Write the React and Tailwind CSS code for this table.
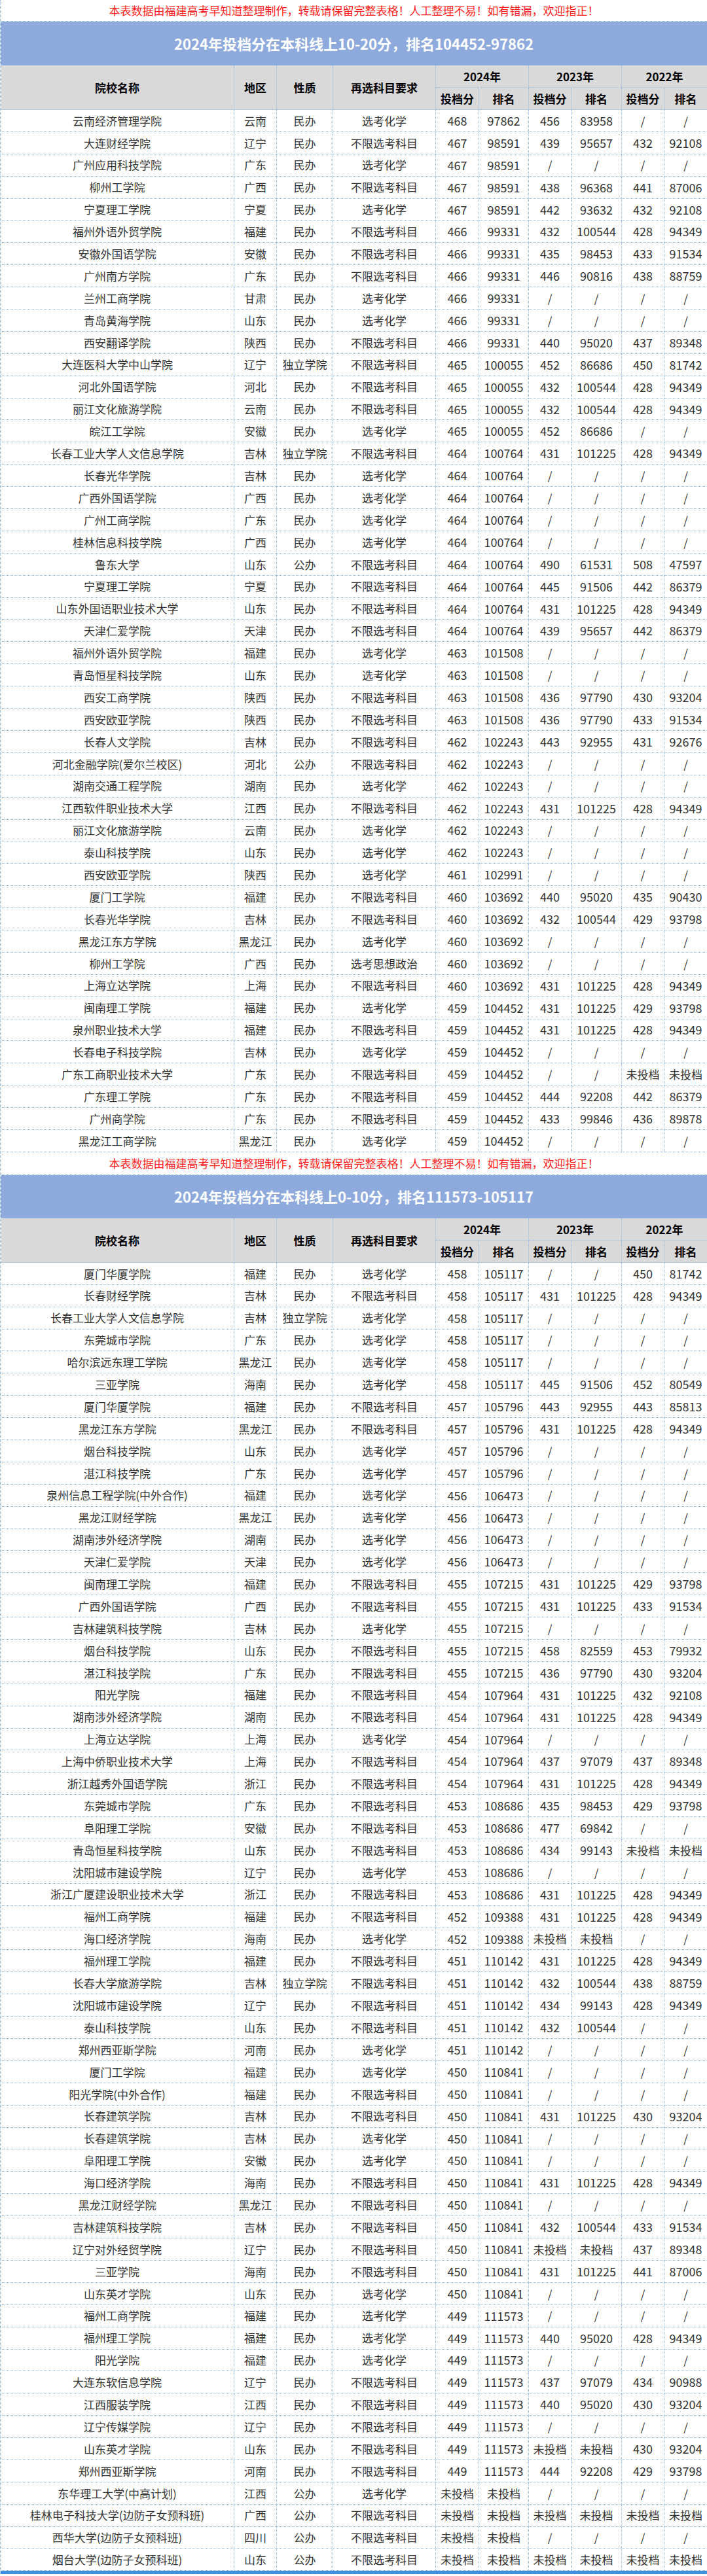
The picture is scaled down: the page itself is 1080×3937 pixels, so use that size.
import React from "react";

const COLS =
  "grid grid-cols-[357px_65px_86px_157px_66px_76px_65px_77px_65px_66px]";

const NOTICE =
  "本表数据由福建高考早知道整理制作，转载请保留完整表格！人工整理不易！如有错漏，欢迎指正！";

const T1 = `云南经济管理学院 云南 民办 选考化学 468 97862 456 83958 / /
大连财经学院 辽宁 民办 不限选考科目 467 98591 439 95657 432 92108
广州应用科技学院 广东 民办 选考化学 467 98591 / / / /
柳州工学院 广西 民办 不限选考科目 467 98591 438 96368 441 87006
宁夏理工学院 宁夏 民办 选考化学 467 98591 442 93632 432 92108
福州外语外贸学院 福建 民办 不限选考科目 466 99331 432 100544 428 94349
安徽外国语学院 安徽 民办 不限选考科目 466 99331 435 98453 433 91534
广州南方学院 广东 民办 不限选考科目 466 99331 446 90816 438 88759
兰州工商学院 甘肃 民办 选考化学 466 99331 / / / /
青岛黄海学院 山东 民办 选考化学 466 99331 / / / /
西安翻译学院 陕西 民办 不限选考科目 466 99331 440 95020 437 89348
大连医科大学中山学院 辽宁 独立学院 不限选考科目 465 100055 452 86686 450 81742
河北外国语学院 河北 民办 不限选考科目 465 100055 432 100544 428 94349
丽江文化旅游学院 云南 民办 不限选考科目 465 100055 432 100544 428 94349
皖江工学院 安徽 民办 选考化学 465 100055 452 86686 / /
长春工业大学人文信息学院 吉林 独立学院 不限选考科目 464 100764 431 101225 428 94349
长春光华学院 吉林 民办 选考化学 464 100764 / / / /
广西外国语学院 广西 民办 选考化学 464 100764 / / / /
广州工商学院 广东 民办 选考化学 464 100764 / / / /
桂林信息科技学院 广西 民办 选考化学 464 100764 / / / /
鲁东大学 山东 公办 不限选考科目 464 100764 490 61531 508 47597
宁夏理工学院 宁夏 民办 不限选考科目 464 100764 445 91506 442 86379
山东外国语职业技术大学 山东 民办 不限选考科目 464 100764 431 101225 428 94349
天津仁爱学院 天津 民办 不限选考科目 464 100764 439 95657 442 86379
福州外语外贸学院 福建 民办 选考化学 463 101508 / / / /
青岛恒星科技学院 山东 民办 选考化学 463 101508 / / / /
西安工商学院 陕西 民办 不限选考科目 463 101508 436 97790 430 93204
西安欧亚学院 陕西 民办 不限选考科目 463 101508 436 97790 433 91534
长春人文学院 吉林 民办 不限选考科目 462 102243 443 92955 431 92676
河北金融学院(爱尔兰校区) 河北 公办 不限选考科目 462 102243 / / / /
湖南交通工程学院 湖南 民办 选考化学 462 102243 / / / /
江西软件职业技术大学 江西 民办 不限选考科目 462 102243 431 101225 428 94349
丽江文化旅游学院 云南 民办 选考化学 462 102243 / / / /
泰山科技学院 山东 民办 选考化学 462 102243 / / / /
西安欧亚学院 陕西 民办 选考化学 461 102991 / / / /
厦门工学院 福建 民办 不限选考科目 460 103692 440 95020 435 90430
长春光华学院 吉林 民办 不限选考科目 460 103692 432 100544 429 93798
黑龙江东方学院 黑龙江 民办 选考化学 460 103692 / / / /
柳州工学院 广西 民办 选考思想政治 460 103692 / / / /
上海立达学院 上海 民办 不限选考科目 460 103692 431 101225 428 94349
闽南理工学院 福建 民办 选考化学 459 104452 431 101225 429 93798
泉州职业技术大学 福建 民办 不限选考科目 459 104452 431 101225 428 94349
长春电子科技学院 吉林 民办 选考化学 459 104452 / / / /
广东工商职业技术大学 广东 民办 不限选考科目 459 104452 / / 未投档 未投档
广东理工学院 广东 民办 不限选考科目 459 104452 444 92208 442 86379
广州商学院 广东 民办 不限选考科目 459 104452 433 99846 436 89878
黑龙江工商学院 黑龙江 民办 选考化学 459 104452 / / / /`;

const T2 = `厦门华厦学院 福建 民办 选考化学 458 105117 / / 450 81742
长春财经学院 吉林 民办 不限选考科目 458 105117 431 101225 428 94349
长春工业大学人文信息学院 吉林 独立学院 选考化学 458 105117 / / / /
东莞城市学院 广东 民办 选考化学 458 105117 / / / /
哈尔滨远东理工学院 黑龙江 民办 选考化学 458 105117 / / / /
三亚学院 海南 民办 选考化学 458 105117 445 91506 452 80549
厦门华厦学院 福建 民办 不限选考科目 457 105796 443 92955 443 85813
黑龙江东方学院 黑龙江 民办 不限选考科目 457 105796 431 101225 428 94349
烟台科技学院 山东 民办 选考化学 457 105796 / / / /
湛江科技学院 广东 民办 选考化学 457 105796 / / / /
泉州信息工程学院(中外合作) 福建 民办 选考化学 456 106473 / / / /
黑龙江财经学院 黑龙江 民办 选考化学 456 106473 / / / /
湖南涉外经济学院 湖南 民办 选考化学 456 106473 / / / /
天津仁爱学院 天津 民办 选考化学 456 106473 / / / /
闽南理工学院 福建 民办 不限选考科目 455 107215 431 101225 429 93798
广西外国语学院 广西 民办 不限选考科目 455 107215 431 101225 433 91534
吉林建筑科技学院 吉林 民办 选考化学 455 107215 / / / /
烟台科技学院 山东 民办 不限选考科目 455 107215 458 82559 453 79932
湛江科技学院 广东 民办 不限选考科目 455 107215 436 97790 430 93204
阳光学院 福建 民办 不限选考科目 454 107964 431 101225 432 92108
湖南涉外经济学院 湖南 民办 不限选考科目 454 107964 431 101225 428 94349
上海立达学院 上海 民办 选考化学 454 107964 / / / /
上海中侨职业技术大学 上海 民办 不限选考科目 454 107964 437 97079 437 89348
浙江越秀外国语学院 浙江 民办 不限选考科目 454 107964 431 101225 428 94349
东莞城市学院 广东 民办 不限选考科目 453 108686 435 98453 429 93798
阜阳理工学院 安徽 民办 不限选考科目 453 108686 477 69842 / /
青岛恒星科技学院 山东 民办 不限选考科目 453 108686 434 99143 未投档 未投档
沈阳城市建设学院 辽宁 民办 选考化学 453 108686 / / / /
浙江广厦建设职业技术大学 浙江 民办 不限选考科目 453 108686 431 101225 428 94349
福州工商学院 福建 民办 不限选考科目 452 109388 431 101225 428 94349
海口经济学院 海南 民办 选考化学 452 109388 未投档 未投档 / /
福州理工学院 福建 民办 不限选考科目 451 110142 431 101225 428 94349
长春大学旅游学院 吉林 独立学院 不限选考科目 451 110142 432 100544 438 88759
沈阳城市建设学院 辽宁 民办 不限选考科目 451 110142 434 99143 428 94349
泰山科技学院 山东 民办 不限选考科目 451 110142 432 100544 / /
郑州西亚斯学院 河南 民办 选考化学 451 110142 / / / /
厦门工学院 福建 民办 选考化学 450 110841 / / / /
阳光学院(中外合作) 福建 民办 不限选考科目 450 110841 / / / /
长春建筑学院 吉林 民办 不限选考科目 450 110841 431 101225 430 93204
长春建筑学院 吉林 民办 选考化学 450 110841 / / / /
阜阳理工学院 安徽 民办 选考化学 450 110841 / / / /
海口经济学院 海南 民办 不限选考科目 450 110841 431 101225 428 94349
黑龙江财经学院 黑龙江 民办 不限选考科目 450 110841 / / / /
吉林建筑科技学院 吉林 民办 不限选考科目 450 110841 432 100544 433 91534
辽宁对外经贸学院 辽宁 民办 不限选考科目 450 110841 未投档 未投档 437 89348
三亚学院 海南 民办 不限选考科目 450 110841 431 101225 441 87006
山东英才学院 山东 民办 选考化学 450 110841 / / / /
福州工商学院 福建 民办 选考化学 449 111573 / / / /
福州理工学院 福建 民办 选考化学 449 111573 440 95020 428 94349
阳光学院 福建 民办 选考化学 449 111573 / / / /
大连东软信息学院 辽宁 民办 不限选考科目 449 111573 437 97079 434 90988
江西服装学院 江西 民办 不限选考科目 449 111573 440 95020 430 93204
辽宁传媒学院 辽宁 民办 不限选考科目 449 111573 / / / /
山东英才学院 山东 民办 不限选考科目 449 111573 未投档 未投档 430 93204
郑州西亚斯学院 河南 民办 不限选考科目 449 111573 444 92208 429 93798
东华理工大学(中高计划) 江西 公办 选考化学 未投档 未投档 / / / /
桂林电子科技大学(边防子女预科班) 广西 公办 不限选考科目 未投档 未投档 未投档 未投档 未投档 未投档
西华大学(边防子女预科班) 四川 公办 不限选考科目 未投档 未投档 / / / /
烟台大学(边防子女预科班) 山东 公办 不限选考科目 未投档 未投档 未投档 未投档 未投档 未投档`;

const parse = (s) => s.split("\n").map((l) => l.trim().split(/\s+/));

const cellBase =
  "flex items-center justify-center whitespace-nowrap overflow-hidden border-r border-b border-dotted border-[#8fbce6]";

function Notice({ h }) {
  return (
    <div
      className={`${h} flex items-center justify-center border-b border-dotted border-[#8fbce6] bg-white text-[17px] text-[#ff1a1a]`}
    >
      {NOTICE}
    </div>
  );
}

function Table({ title, rows, noticeH, titleH }) {
  return (
    <div>
      <Notice h={noticeH} />
      <div
        className={`${titleH} flex items-center justify-center border-b border-dotted border-[#8fbce6] bg-[#8eaadc] text-[22px] font-bold text-white`}
      >
        {title}
      </div>
      <div
        className={`${COLS} grid-rows-[34px_34px] bg-[#d9d9d9] text-[17px] font-bold text-black`}
      >
        <div className={`${cellBase} row-span-2`}>院校名称</div>
        <div className={`${cellBase} row-span-2`}>地区</div>
        <div className={`${cellBase} row-span-2`}>性质</div>
        <div className={`${cellBase} row-span-2`}>再选科目要求</div>
        <div className={`${cellBase} col-span-2`}>2024年</div>
        <div className={`${cellBase} col-span-2`}>2023年</div>
        <div className={`${cellBase} col-span-2`}>2022年</div>
        <div className={cellBase}>投档分</div>
        <div className={cellBase}>排名</div>
        <div className={cellBase}>投档分</div>
        <div className={cellBase}>排名</div>
        <div className={cellBase}>投档分</div>
        <div className={cellBase}>排名</div>
      </div>
      {rows.map((r, i) => (
        <div
          key={i}
          className={`${COLS} h-[33.9px] bg-white text-[17px] text-[#333333]`}
        >
          {r.map((c, j) => (
            <div
              key={j}
              className={`${cellBase} ${/^\d+$/.test(c) ? "text-[18px]" : ""}`}
            >
              {c}
            </div>
          ))}
        </div>
      ))}
    </div>
  );
}

export default function App() {
  return (
    <div className="w-[1080px] border-l border-dotted border-[#8fbce6] bg-white font-['Noto_Sans_CJK_SC','Noto_Sans',sans-serif]">
      <Table
        title="2024年投档分在本科线上10-20分，排名104452-97862"
        rows={parse(T1)}
        noticeH="h-[33px]"
        titleH="h-[67px]"
      />
      <Table
        title="2024年投档分在本科线上0-10分，排名111573-105117"
        rows={parse(T2)}
        noticeH="h-[35px]"
        titleH="h-[66px]"
      />
      <div className="h-[5px] bg-[#3b8fe0]" />
    </div>
  );
}
